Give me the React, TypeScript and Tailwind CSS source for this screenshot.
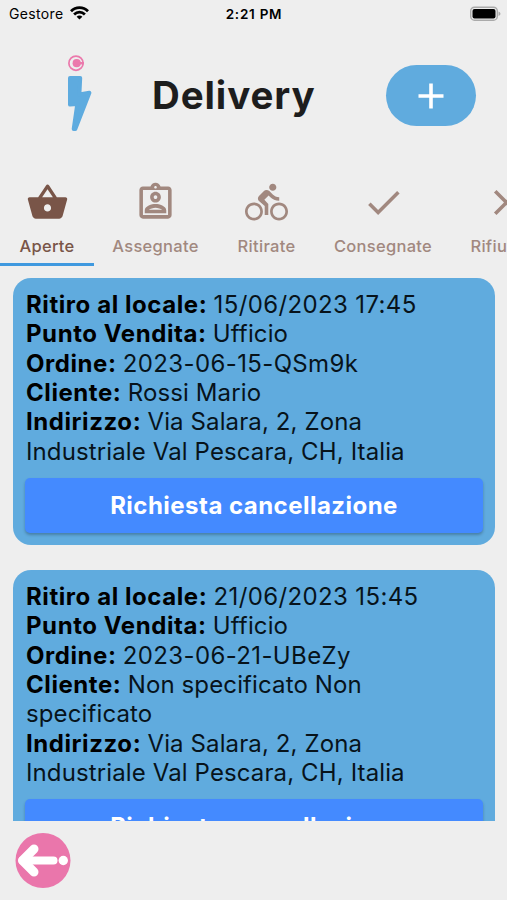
import type { ReactNode } from "react";
import {
  MdCheck,
  MdClose,
  MdDirectionsBike,
  MdOutlineAssignmentInd,
  MdShoppingBasket,
} from "react-icons/md";

type Line = { label?: string; value: string; numeric?: boolean };

const firstOrder: Line[] = [
  { label: "Ritiro al locale:", value: "15/06/2023 17:45", numeric: true },
  { label: "Punto Vendita:", value: "Ufficio" },
  { label: "Ordine:", value: "2023-06-15-QSm9k", numeric: true },
  { label: "Cliente:", value: "Rossi Mario" },
  { label: "Indirizzo:", value: "Via Salara, 2, Zona" },
  { value: "Industriale Val Pescara, CH, Italia" },
];

const secondOrder: Line[] = [
  { label: "Ritiro al locale:", value: "21/06/2023 15:45", numeric: true },
  { label: "Punto Vendita:", value: "Ufficio" },
  { label: "Ordine:", value: "2023-06-21-UBeZy", numeric: true },
  { label: "Cliente:", value: "Non specificato Non" },
  { value: "specificato" },
  { label: "Indirizzo:", value: "Via Salara, 2, Zona" },
  { value: "Industriale Val Pescara, CH, Italia" },
];

function StatusBar() {
  return (
    <div className="grid h-7 grid-cols-3 items-center pr-[6px] pl-[9px] text-[14px] text-black">
      <div className="flex items-center gap-[6px]">
        <span className="-mt-px tracking-[0.35px]">Gestore</span>
        <svg className="-mt-[3px] h-[14px] w-[19px]" viewBox="0 0 19 14" fill="none" stroke="#000" strokeWidth="2.8">
          <path d="M1 5.2C5.8.4 13.2.4 18 5.2" />
          <path d="M4.1 8.4c3.1-3 7.7-3 10.8 0" />
          <path d="M9.5 13.6 6.6 10.7c1.6-1.5 4.2-1.5 5.8 0z" fill="#000" stroke="none" />
        </svg>
      </div>
      <span className="-ml-[2px] text-center text-[13.5px] font-semibold tracking-[0.75px]">2:21 PM</span>
      <svg className="-mt-px h-[16px] w-[31px] justify-self-end" viewBox="0 0 31 16">
        <rect x=".7" y="1.2" width="26.6" height="13" rx="3.8" fill="#ededed" stroke="#aaa" strokeWidth="1.4" />
        <rect x="2.5" y="3" width="23" height="9.5" rx="2" />
        <path d="M28.5 5.5c2.6 1 2.6 3.6 0 4.6z" fill="#aaa" />
      </svg>
    </div>
  );
}

function Logo() {
  return (
    <svg className="h-[80px] w-[32px]" viewBox="0 0 32 80">
      <circle cx="14" cy="9.2" r="7.1" fill="none" stroke="#eb79ac" strokeWidth="1.7" />
      <circle cx="14.7" cy="9.2" r="4.1" fill="#eb79ac" />
      <path d="M14 9.2h8" stroke="#eb79ac" strokeWidth="2.4" />
      <path
        d="M8 24 18.2 24 17.4 40.5 27.4 38.8 13.3 75 11.7 75 15.3 50 8 50.5z"
        fill="#5eabdf"
        stroke="#5eabdf"
        strokeWidth="4"
        strokeLinejoin="round"
      />
    </svg>
  );
}

function Tab({ icon, label, width, active }: { icon: ReactNode; label: string; width: string; active?: boolean }) {
  return (
    <div
      className={`flex h-full shrink-0 flex-col items-center border-b-[3px] pt-[9px] text-[16.5px] font-medium ${width} ${
        active ? "border-[#3f99df] text-[#795548]" : "border-transparent text-[#a1887f]"
      }`}
    >
      <span className="text-[43px] leading-none">{icon}</span>
      <span className="mt-[10px] leading-[24px] tracking-[0.3px] whitespace-nowrap">{label}</span>
    </div>
  );
}

function OrderCard({ lines }: { lines: Line[] }) {
  return (
    <article className="rounded-[18px] bg-[#60abde] px-3 pt-[12px] pb-[12px]">
      <div className="pl-px text-[24px] leading-[29.35px] text-[#07131b]">
        {lines.map((line, index) => (
          <p key={index} className="whitespace-nowrap">
            {line.label && <b className="font-bold tracking-[0.57px] text-black">{line.label} </b>}
            <span className={line.numeric ? "tracking-[0.37px]" : "tracking-[0.12px]"}>{line.value}</span>
          </p>
        ))}
      </div>
      <button className="mt-[12px] flex h-[55px] w-full items-center justify-center rounded-[5px] bg-[#448aff] pt-px text-[24px] font-bold tracking-[0.47px] text-white shadow-[0_2px_3px_rgba(0,0,0,0.25)]">
        Richiesta cancellazione
      </button>
    </article>
  );
}

export default function App() {
  return (
    <div className="flex h-[900px] w-[507px] flex-col overflow-hidden bg-[#eeeeee] font-['Inter',sans-serif]">
      <StatusBar />
      <header className="flex h-[144px] items-start pt-[26px] pr-[31px] pl-[62px]">
        <Logo />
        <h1 className="mt-[16px] ml-[58px] text-[38.5px] leading-[50px] font-[650] tracking-[0.9px] text-[#1d1d1d]">
          Delivery
        </h1>
        <button className="mt-[11px] ml-auto flex h-[61px] w-[90px] items-center justify-center rounded-full bg-[#60abde]">
          <svg className="h-[26px] w-[26px]" viewBox="0 0 26 26" stroke="#fff" strokeWidth="3.6">
            <path d="M13 .5v25M.5 13h25" />
          </svg>
        </button>
      </header>
      <nav className="flex h-[94px] shrink-0 overflow-hidden">
        <Tab icon={<MdShoppingBasket />} label="Aperte" width="w-[94px]" active />
        <Tab icon={<MdOutlineAssignmentInd />} label="Assegnate" width="w-[123px]" />
        <Tab icon={<MdDirectionsBike />} label="Ritirate" width="w-[99px]" />
        <Tab icon={<MdCheck />} label="Consegnate" width="w-[134px]" />
        <Tab icon={<MdClose className="ml-[3px]" />} label="Rifiutate" width="w-[109px]" />
      </nav>
      <main className="flex h-[555px] shrink-0 flex-col gap-[25px] overflow-hidden pt-3 pr-3 pl-[13px]">
        <OrderCard lines={firstOrder} />
        <OrderCard lines={secondOrder} />
      </main>
      <footer className="px-[15px] pt-[12px]">
        <svg className="h-[56px] w-[56px]" viewBox="0 0 56 56" fill="none" stroke="#fff" strokeLinecap="round" strokeLinejoin="round">
          <circle cx="28" cy="27.5" r="27.5" fill="#ea76ab" stroke="none" />
          <path d="M19 16 7.5 27.5 19 39" strokeWidth="9" />
          <path d="M7.5 27.5H38.5" strokeWidth="8" />
          <circle cx="48.3" cy="27.5" r="4.7" fill="#fff" stroke="none" />
        </svg>
      </footer>
    </div>
  );
}
